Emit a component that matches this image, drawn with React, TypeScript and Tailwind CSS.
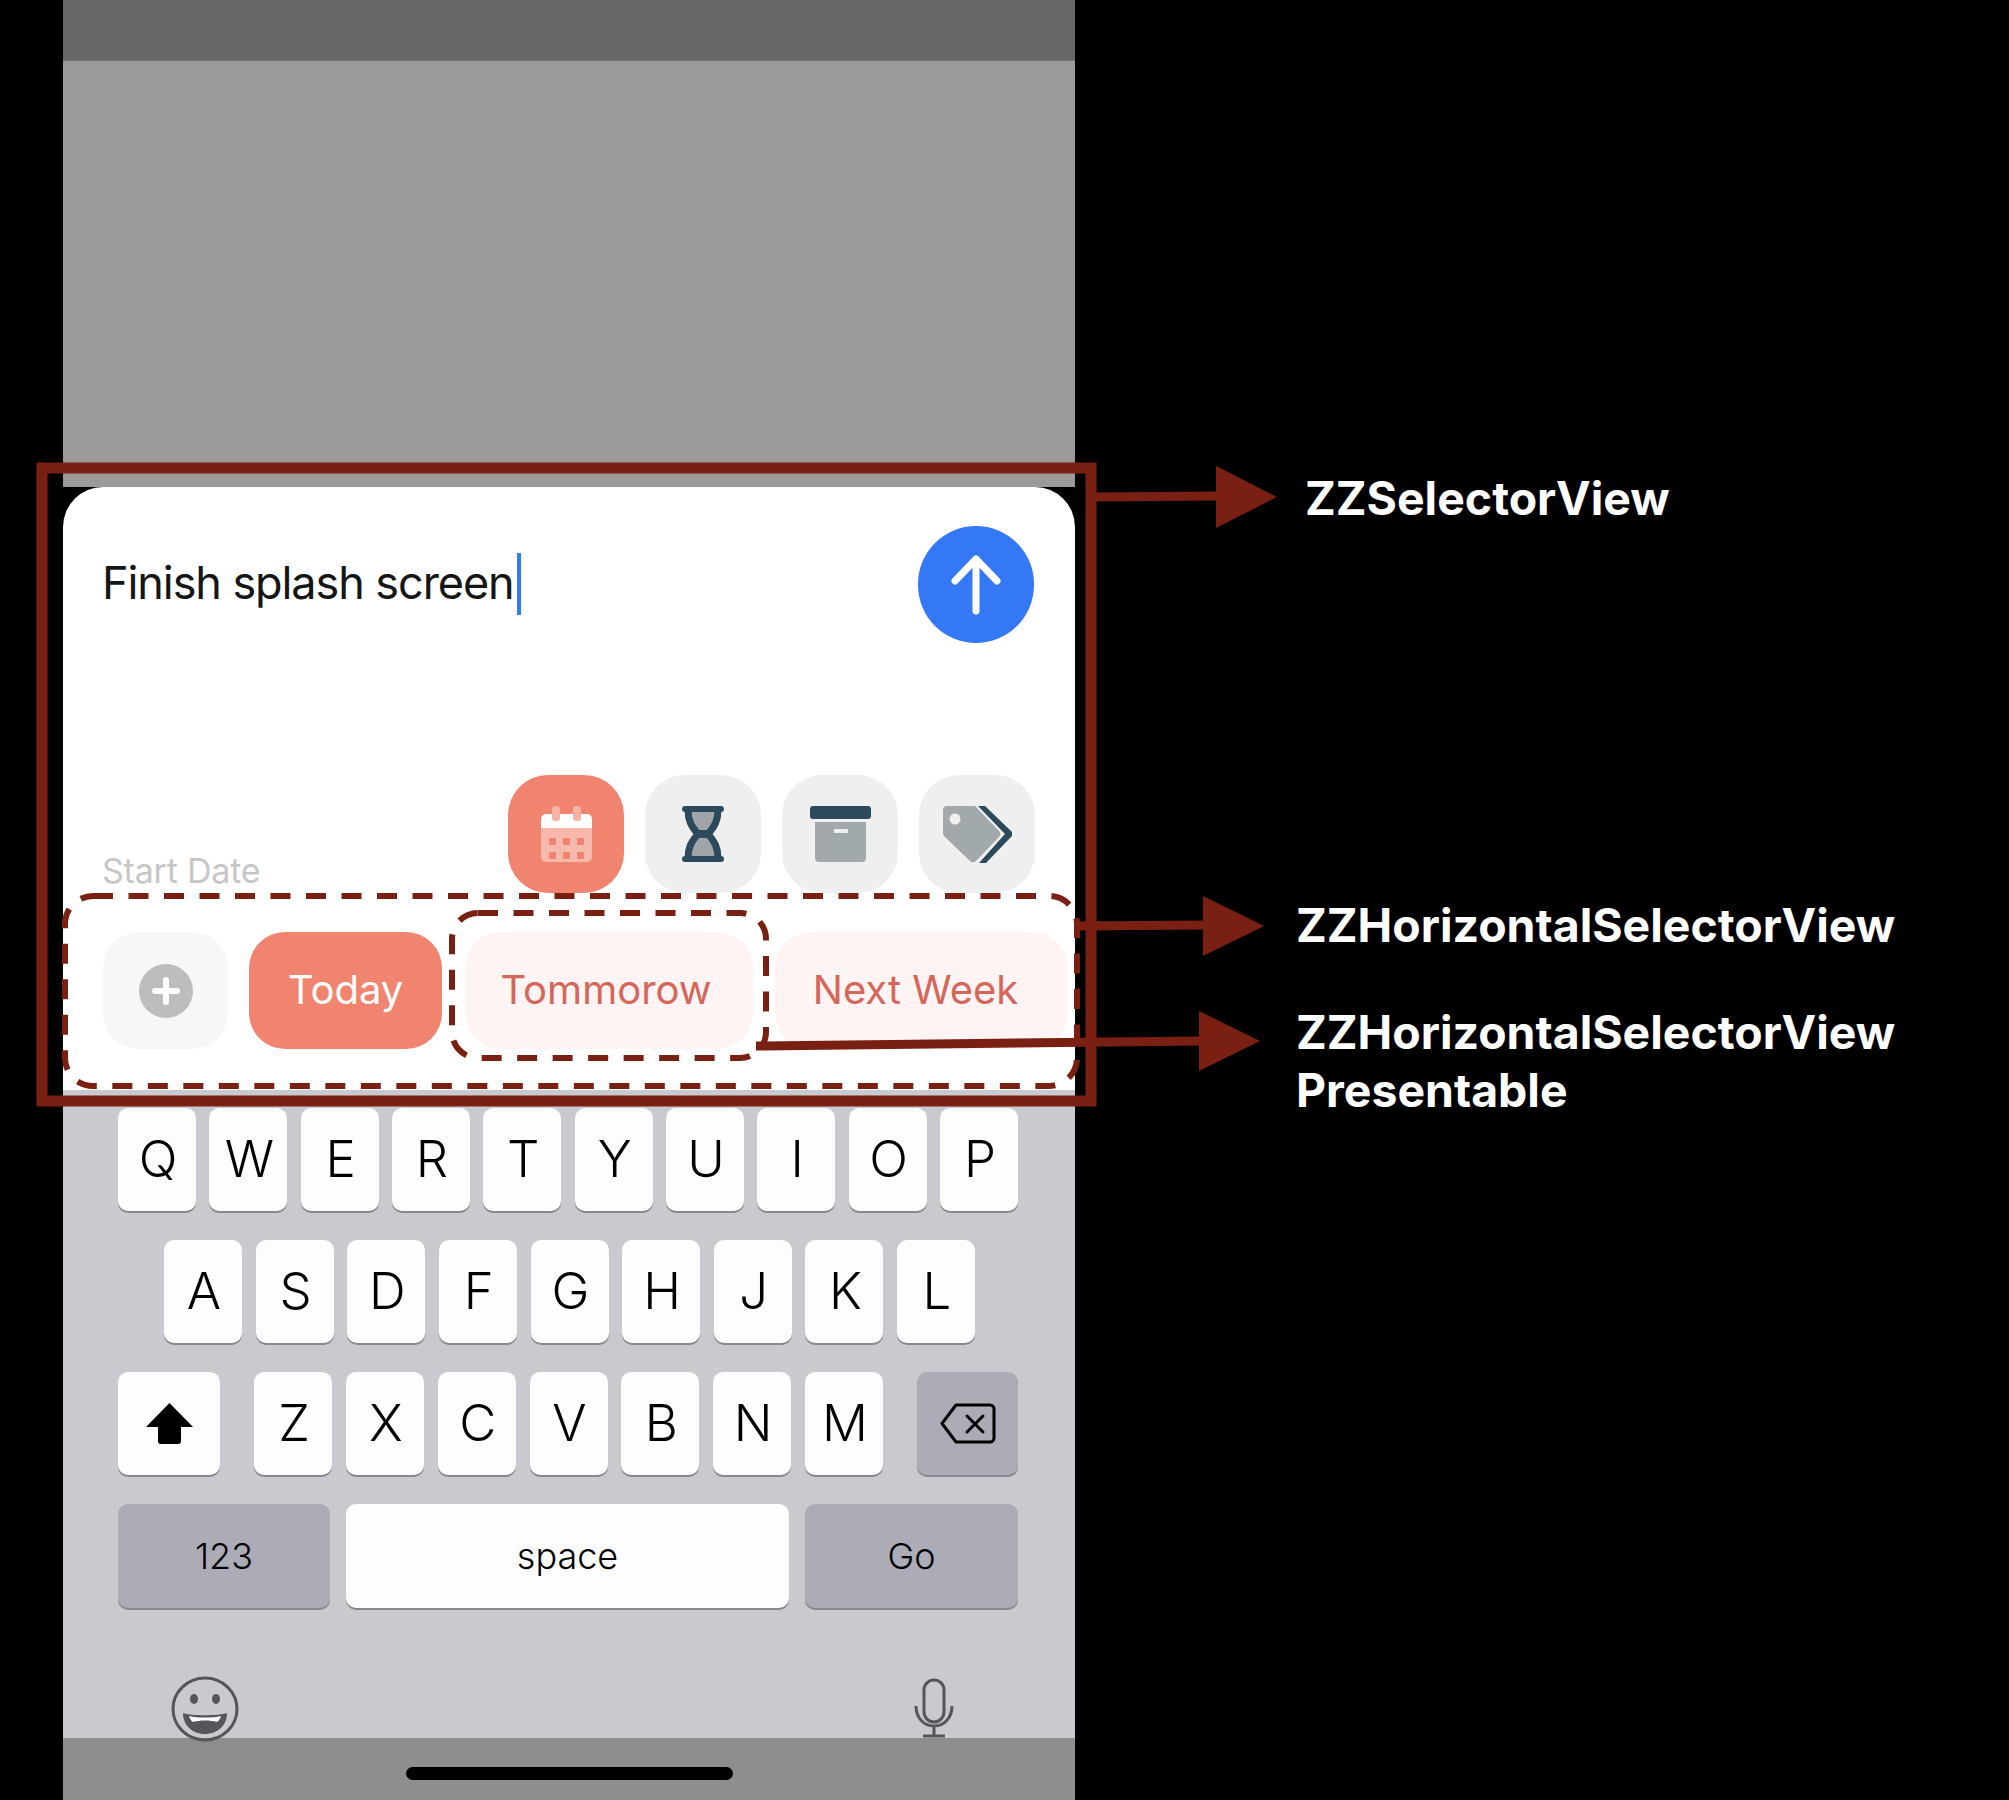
const topRow = ["Q", "W", "E", "R", "T", "Y", "U", "I", "O", "P"];
const midRow = ["A", "S", "D", "F", "G", "H", "J", "K", "L"];
const lowRow = ["Z", "X", "C", "V", "B", "N", "M"];

function Key({ label }: { label: string }) {
  return (
    <div className="w-[78px] h-[103px] pl-[2px] rounded-[10px] bg-[#fdfdfe] shadow-[0_2px_0_#88898e] flex items-center justify-center text-[51px] font-light text-black">
      {label}
    </div>
  );
}

function IconButton({ active, children }: { active?: boolean; children: React.ReactNode }) {
  return (
    <div className={`${active ? "bg-[#f1846f]" : "bg-[#efeff0]"} w-[116px] h-[118px] rounded-[40px] flex items-center justify-center`}>
      {children}
    </div>
  );
}

function CalendarIcon() {
  return (
    <svg width="51" height="57" viewBox="0 0 51 57">
      <path d="M0 22h51v29a5 5 0 0 1-5 5H5a5 5 0 0 1-5-5z" fill="#f8b9ad" />
      <path d="M0 22V13a5 5 0 0 1 5-5h41a5 5 0 0 1 5 5v9z" fill="#fff" />
      <rect x="11" y="0" width="8" height="15" rx="3" fill="#f6b3a6" />
      <rect x="32" y="0" width="8" height="15" rx="3" fill="#f6b3a6" />
      {[8, 22, 36].map(x => [32, 46].map(y => <rect key={`${x}-${y}`} x={x} y={y} width="7" height="7" rx="1" fill="#f1846f" />))}
    </svg>
  );
}

function HourglassIcon() {
  return (
    <svg width="42" height="56" viewBox="0 0 42 56">
      <path d="M6 4h30c0 10-3 16-10 24 7 8 10 14 10 24H6c0-10 3-16 10-24C9 20 6 14 6 4z" fill="#9fa5a9" />
      <path d="M6 4c0 10 3 16 10 24-7 8-10 14-10 24M36 4c0 10-3 16-10 24 7 8 10 14 10 24" fill="none" stroke="#2d4a5c" strokeWidth="7" />
      <path d="M16 28h10" stroke="#2d4a5c" strokeWidth="8" />
      <rect x="0" y="0" width="42" height="6" rx="3" fill="#2d4a5c" />
      <rect x="0" y="50" width="42" height="6" rx="3" fill="#2d4a5c" />
    </svg>
  );
}

function BoxIcon() {
  return (
    <svg width="61" height="56" viewBox="0 0 61 56">
      <rect x="0" y="0" width="61" height="13" rx="3" fill="#2d4a5c" />
      <path d="M5 16h51v36a4 4 0 0 1-4 4H9a4 4 0 0 1-4-4z" fill="#a2a9ad" />
      <rect x="24" y="23" width="14" height="4" fill="#eef0f0" />
    </svg>
  );
}

function TagIcon() {
  return (
    <svg width="69" height="57" viewBox="0 0 69 57">
      <path d="M4 0h28l24 25a4 4 0 0 1 0 6L33 55a4 4 0 0 1-6 0L2 31a5 5 0 0 1-2-4V4a4 4 0 0 1 4-4z" fill="#a2a9ad" />
      <circle cx="12" cy="13" r="5.5" fill="#eef0f0" />
      <path d="M35 0h7l26 25a4 4 0 0 1 0 6L43 57h-7l26-29z" fill="#2d4a5c" />
    </svg>
  );
}

export default function App() {
  return (
    <div className="relative w-[2009px] h-[1800px] bg-black overflow-hidden font-['Inter',sans-serif]">
      <div className="ml-[63px] w-[1012px] h-full flex flex-col">
        <div className="h-[61px] shrink-0 bg-[#686868] border-b border-[#757575]" />
        <div className="h-[426px] shrink-0 bg-[#9a9a9a]" />

        <div className="h-[603px] shrink-0 bg-white rounded-t-[40px] flex flex-col">
          <div className="mt-[39px] pl-[39px] pr-[41px] flex items-center justify-between">
            <div className="flex items-center">
              <span className="text-[45px] pb-[3px] text-[#151515] tracking-[-1.08px]">Finish splash screen</span>
              <span className="ml-[3px] mb-[2px] w-[4px] h-[62px] bg-[#2f7cf6]" />
            </div>
            <div className="w-[116px] h-[117px] rounded-full bg-[#3478f6] flex items-center justify-center">
              <svg width="50" height="60" viewBox="0 0 50 60" fill="none" stroke="#fff" strokeWidth="7" strokeLinecap="round" strokeLinejoin="round">
                <path d="M25 56V4M4 26 25 4l21 22" />
              </svg>
            </div>
          </div>

          <div className="mt-[132px] pl-[39px] pr-[40px] flex items-end justify-between">
            <span className="text-[34px] text-[#c6c6c6] leading-none mb-[5px] tracking-[-0.2px]">Start Date</span>
            <div className="flex gap-[21px]">
              <IconButton active><CalendarIcon /></IconButton>
              <IconButton><HourglassIcon /></IconButton>
              <IconButton><BoxIcon /></IconButton>
              <IconButton><TagIcon /></IconButton>
            </div>
          </div>

          <div className="mt-[39px] pl-[40px] flex text-[40px] h-[117px]">
            <div className="w-[125px] rounded-[36px] bg-[#f7f7f7] flex items-center justify-center">
              <div className="w-[54px] h-[54px] rounded-full bg-[#bdbdbd] flex items-center justify-center">
                <svg width="30" height="30" viewBox="0 0 30 30" stroke="#fff" strokeWidth="6" strokeLinecap="round">
                  <path d="M15 4v22M4 15h22" />
                </svg>
              </div>
            </div>
            <div className="ml-[21px] w-[193px] pb-[1px] rounded-[36px] bg-[#f1846f] text-white flex items-center justify-center">Today</div>
            <div className="ml-[23px] w-[288px] pr-[6px] pb-[1px] rounded-[36px] bg-[#fdf4f3] text-[#d4675a] flex items-center justify-center">Tommorow</div>
            <div className="ml-[22px] w-[293px] pr-[12px] pb-[1px] rounded-[36px] bg-[#fdf4f3] text-[#d4675a] flex items-center justify-center">Next Week</div>
          </div>
        </div>

        <div className="flex-1 min-h-0 bg-[#c9cacf] pt-[18px] flex flex-col gap-[29px]">
          <div className="pl-[55px] pr-[57px] flex justify-between shrink-0">
            {topRow.map(k => <Key key={k} label={k} />)}
          </div>
          <div className="pl-[101px] pr-[100px] flex justify-between shrink-0">
            {midRow.map(k => <Key key={k} label={k} />)}
          </div>
          <div className="pl-[55px] pr-[57px] flex justify-between shrink-0">
            <div className="w-[102px] h-[103px] rounded-[10px] bg-[#fdfdfe] shadow-[0_2px_0_#88898e] flex items-center justify-center">
              <svg width="47" height="41" viewBox="0 0 47 41">
                <path d="M23.5 0 47 24H35v14a3 3 0 0 1-3 3H15a3 3 0 0 1-3-3V24H0z" fill="#000" />
              </svg>
            </div>
            <div className="flex gap-[13.8px]">
              {lowRow.map(k => <Key key={k} label={k} />)}
            </div>
            <div className="w-[101px] h-[103px] rounded-[10px] bg-[#abacb6] shadow-[0_2px_0_#88898e] flex items-center justify-center">
              <svg width="56" height="41" viewBox="0 0 56 41" fill="none" stroke="#000" strokeWidth="3" strokeLinejoin="round" strokeLinecap="round">
                <path d="M16 2h34a4 4 0 0 1 4 4v29a4 4 0 0 1-4 4H16L2 20.5z" />
                <path d="M27 13l16 16M43 13 27 29" />
              </svg>
            </div>
          </div>
          <div className="pl-[55px] pr-[57px] flex gap-[16px] text-[36px] font-light text-black shrink-0">
            <div className="w-[212px] h-[104px] rounded-[10px] bg-[#abacb6] shadow-[0_2px_0_#88898e] flex items-center justify-center">123</div>
            <div className="flex-1 h-[104px] rounded-[10px] bg-[#fdfdfe] shadow-[0_2px_0_#88898e] flex items-center justify-center">space</div>
            <div className="w-[213px] h-[104px] rounded-[10px] bg-[#abacb6] shadow-[0_2px_0_#88898e] flex items-center justify-center">Go</div>
          </div>

          <div className="mt-[39px] h-[62px] shrink-0 pl-[108px] pr-[121px] flex justify-between items-start relative z-10">
            <svg width="68" height="66" viewBox="0 0 68 66" className="shrink-0">
              <ellipse cx="34" cy="33" rx="32" ry="31" fill="none" stroke="#55565a" strokeWidth="3" />
              <ellipse cx="23" cy="23" rx="4" ry="5" fill="#55565a" />
              <ellipse cx="45" cy="23" rx="4" ry="5" fill="#55565a" />
              <path d="M12 37c7 3 37 3 44 0 0 12-9 21-22 21S12 49 12 37z" fill="#55565a" />
              <path d="M18 40c8 2 24 2 32 0-1 3-2 5-4 6-7-2-17-2-24 0-2-1-3-3-4-6z" fill="#fff" />
            </svg>
            <svg width="40" height="60" viewBox="0 0 40 60" fill="none" stroke="#55565a" strokeWidth="3" className="mt-[2px] shrink-0">
              <rect x="10" y="2" width="20" height="42" rx="10" />
              <path d="M2 28c0 12 8 20 18 20s18-8 18-20M20 48v9M9 58h22" />
            </svg>
          </div>
        </div>

        <div className="h-[62px] shrink-0 bg-[#8e8e8e] flex justify-center">
          <div className="mt-[29px] w-[327px] h-[13px] rounded-full bg-black" />
        </div>
      </div>

      {/* annotations */}
      <svg className="absolute inset-0" width="2009" height="1800" viewBox="0 0 2009 1800" fill="none">
        <rect x="42" y="468" width="1049" height="633" stroke="#7a2012" strokeWidth="11" />
        <rect x="65" y="896" width="1012" height="190" rx="28" stroke="#7a2012" strokeWidth="6" strokeDasharray="20 15.5" />
        <rect x="452" y="913" width="314" height="145" rx="26" stroke="#7a2012" strokeWidth="6" strokeDasharray="20 15.5" />
        <path d="M1095 497 1220 496" stroke="#7a2012" strokeWidth="9" />
        <path d="M1216 466 1277 497 1216 528z" fill="#7a2012" />
        <path d="M1074 926 1206 925" stroke="#7a2012" strokeWidth="9" />
        <path d="M1203 896 1264 926 1203 956z" fill="#7a2012" />
        <path d="M756 1046 1202 1041" stroke="#7a2012" strokeWidth="9" />
        <path d="M1199 1011 1260 1041 1199 1071z" fill="#7a2012" />
      </svg>
      <div className="absolute left-[1305px] top-[469px] text-[46.4px] leading-[58px] font-bold text-white">ZZSelectorView</div>
      <div className="absolute left-[1296px] top-[896px] text-[46.4px] leading-[58px] font-bold text-white">ZZHorizontalSelectorView</div>
      <div className="absolute left-[1296px] top-[1003px] text-[46.4px] leading-[58px] font-bold text-white">
        ZZHorizontalSelectorView<br />Presentable
      </div>
    </div>
  );
}
